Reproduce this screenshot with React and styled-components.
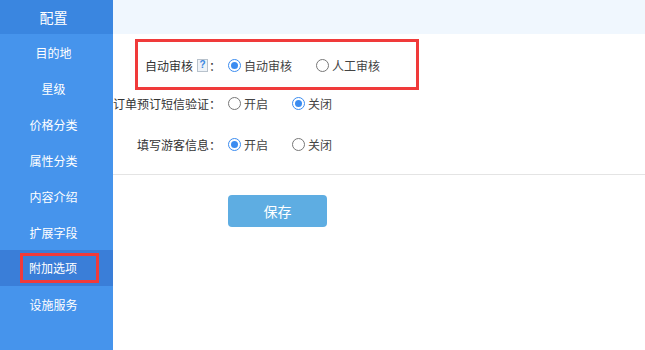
import React from 'react';
import styled, { createGlobalStyle } from 'styled-components';

const GlobalStyle = createGlobalStyle`
  html, body {
    margin: 0;
    padding: 0;
    background: #fff;
    font-family: 'Noto Sans CJK SC', 'Noto Sans', sans-serif;
  }
`;

const Layout = styled.div`
  display: flex;
  min-height: 100vh;
`;

const Sidebar = styled.aside`
  width: 113px;
  flex-shrink: 0;
  background: #4694ec;
  display: flex;
  flex-direction: column;
`;

const SideHeader = styled.div`
  height: 34px;
  background: #3a86e0;
  color: #fff;
  font-size: 14px;
  display: flex;
  align-items: center;
  justify-content: center;
  padding-right: 6px;
`;

const SideItem = styled.div`
  height: 36px;
  display: flex;
  align-items: center;
  justify-content: center;
  padding-right: 6px;
  color: #fff;
  font-size: 12px;
  background: ${(p) => (p.$active ? '#3a7ed8' : 'transparent')};
`;

const Marked = styled.span`
  display: inline-block;
  border: 3px solid #f03a3a;
  padding: 2px 19px 2px 6px;
  margin-left: 12px;
  line-height: 20px;
`;

const Main = styled.main`
  flex: 1;
  display: flex;
  flex-direction: column;
`;

const TopBar = styled.div`
  height: 34px;
  background: #f0f7fe;
`;

const Form = styled.div`
  position: relative;
`;

const Highlight = styled.div`
  position: absolute;
  left: 22px;
  top: 5px;
  width: 284px;
  height: 51px;
  box-sizing: border-box;
  border: 3px solid #f03a3a;
  pointer-events: none;
`;

const Row = styled.div`
  display: flex;
  align-items: center;
  height: 20px;
  margin-top: ${(p) => p.$mt}px;
  font-size: 12px;
`;

const Label = styled.div`
  width: 108px;
  flex-shrink: 0;
  display: flex;
  justify-content: flex-end;
  align-items: center;
  white-space: nowrap;
  color: #333;
  margin-right: 7px;
`;

const Help = styled.span`
  display: inline-flex;
  align-items: center;
  justify-content: center;
  width: 9px;
  height: 11px;
  margin: 0 1px 0 4px;
  border: 1px solid #b8c2cc;
  background: #eef3f8;
  color: #3a86e0;
  font-size: 10px;
  font-weight: bold;
  font-family: 'Liberation Sans', sans-serif;
  line-height: 1;
`;

const Option = styled.label`
  display: flex;
  align-items: center;
  margin-right: 24px;
  color: #444;
`;

const Circle = styled.span`
  width: 13px;
  height: 13px;
  box-sizing: border-box;
  border-radius: 50%;
  border: 1px solid ${(p) => (p.$on ? '#3b8cf0' : '#777')};
  background: #fff;
  margin-right: 3px;
  display: flex;
  align-items: center;
  justify-content: center;

  &::after {
    content: '';
    width: 7px;
    height: 7px;
    border-radius: 50%;
    background: ${(p) => (p.$on ? '#3b8cf0' : 'transparent')};
  }
`;

const Divider = styled.div`
  height: 1px;
  background: #e4e4e4;
  margin-top: 20px;
`;

const SaveButton = styled.button`
  width: 99px;
  height: 32px;
  margin: 20px 0 0 115px;
  border: none;
  border-radius: 4px;
  background: #5eade2;
  color: #fff;
  font-size: 14px;
  font-family: inherit;
`;

const menu = ['目的地', '星级', '价格分类', '属性分类', '内容介绍', '扩展字段', '附加选项', '设施服务'];

const rows = [
  { label: '自动审核', help: true, options: ['自动审核', '人工审核'], value: 0, mt: 21 },
  { label: '订单预订短信验证', options: ['开启', '关闭'], value: 1, mt: 18 },
  { label: '填写游客信息', options: ['开启', '关闭'], value: 0, mt: 21 },
];

export default function App() {
  return (
    <>
      <GlobalStyle />
      <Layout>
        <Sidebar>
          <SideHeader>配置</SideHeader>
          {menu.map((m) => (
            <SideItem key={m} $active={m === '附加选项'}>
              {m === '附加选项' ? <Marked>{m}</Marked> : m}
            </SideItem>
          ))}
        </Sidebar>
        <Main>
          <TopBar />
          <Form>
            <Highlight />
            {rows.map((r) => (
              <Row key={r.label} $mt={r.mt}>
                <Label>
                  {r.label}
                  {r.help && <Help>?</Help>}
                  ：
                </Label>
                {r.options.map((o, i) => (
                  <Option key={o}>
                    <Circle $on={i === r.value} />
                    {o}
                  </Option>
                ))}
              </Row>
            ))}
            <Divider />
            <SaveButton>保存</SaveButton>
          </Form>
        </Main>
      </Layout>
    </>
  );
}
